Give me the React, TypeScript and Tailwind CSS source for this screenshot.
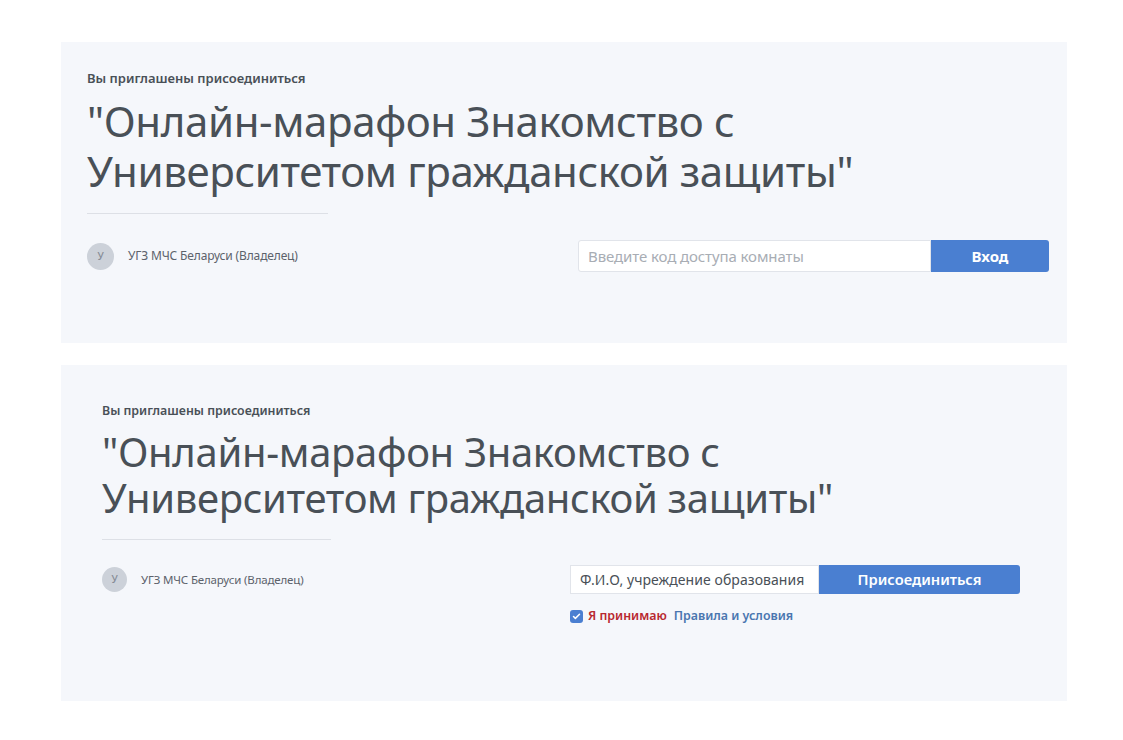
import { Check } from 'lucide-react';

const title = ['"Онлайн-марафон Знакомство с', 'Университетом гражданской защиты"'];

const Owner = ({ size, text }: { size: string; text: string }) => (
  <div className="flex items-center gap-[14px]">
    <div className={`${size} rounded-full bg-[#ccd1d9] flex items-center justify-center text-[10px] font-medium text-[#858b95]`}>
      У
    </div>
    <span className={`${text} text-[#5c626b] tracking-[-0.15px]`}>УГЗ МЧС Беларуси (Владелец)</span>
  </div>
);

export default function App() {
  return (
    <div className="w-[1123px] h-[740px] bg-white overflow-hidden pt-[42px] pl-[61px] font-['Noto_Sans',sans-serif]">
      {/* Room code */}
      <section className="w-[1006px] h-[301px] bg-[#f5f7fb] pt-[28px] pl-[26px] pr-[18px]">
        <p className="text-[13px] leading-[17px] font-semibold text-[#495057]">Вы приглашены присоединиться</p>
        <h1 className="mt-[9px] text-[42px] leading-[50px] font-normal text-[#495057] tracking-[-0.38px] whitespace-nowrap">
          {title[0]}
          <br />
          {title[1]}
        </h1>
        <div className="mt-[17px] w-[241px] h-px bg-[#dde0e6]" />
        <div className="mt-[26px] flex items-center justify-between">
          <Owner size="w-[27px] h-[27px]" text="text-[12px]" />
          <div className="flex w-[471px] h-[32px]">
            <div className="flex-1 flex items-center pl-[9px] bg-white border border-[#e1e4ea] rounded-l-[3px] text-[15px] text-[#a8adb4] tracking-[-0.1px]">
              Введите код доступа комнаты
            </div>
            <button className="w-[118px] bg-[#4a7fd1] rounded-r-[3px] text-white text-[15px] font-bold">Вход</button>
          </div>
        </div>
      </section>

      {/* Join form */}
      <section className="mt-[22px] w-[1006px] h-[336px] bg-[#f5f7fb] pt-[37px] pl-[41px] pr-[47px]">
        <p className="text-[12.4px] leading-[17px] font-semibold text-[#495057]">Вы приглашены присоединиться</p>
        <h1 className="mt-[10px] text-[40px] leading-[46px] font-normal text-[#495057] tracking-[-0.32px] whitespace-nowrap">
          {title[0]}
          <br />
          {title[1]}
        </h1>
        <div className="mt-[18px] w-[229px] h-px bg-[#dde0e6]" />
        <div className="mt-[25px] flex items-start justify-between">
          <div className="mt-[2px]">
            <Owner size="w-[25px] h-[25px]" text="text-[11.5px]" />
          </div>
          <div className="w-[450px]">
            <div className="flex h-[29px]">
              <div className="flex-1 flex items-center pl-[9px] bg-white border border-[#e1e4ea] text-[14px] text-[#495057] tracking-[0.07px] whitespace-nowrap">
                Ф.И.О, учреждение образования
              </div>
              <button className="w-[201px] bg-[#4a7fd1] rounded-r-[3px] text-white text-[14.7px] font-semibold">Присоединиться</button>
            </div>
            <div className="mt-[13px] flex items-center text-[12.4px] font-semibold">
              <span className="w-[13px] h-[13px] rounded-[3px] bg-[#4a7fd1] flex items-center justify-center">
                <Check className="w-[9px] h-[9px] text-white" strokeWidth={4} />
              </span>
              <span className="ml-[5px] text-[#b8282f]">Я принимаю</span>
              <span className="ml-[7px] text-[#4a76b0]">Правила и условия</span>
            </div>
          </div>
        </div>
      </section>
    </div>
  );
}
